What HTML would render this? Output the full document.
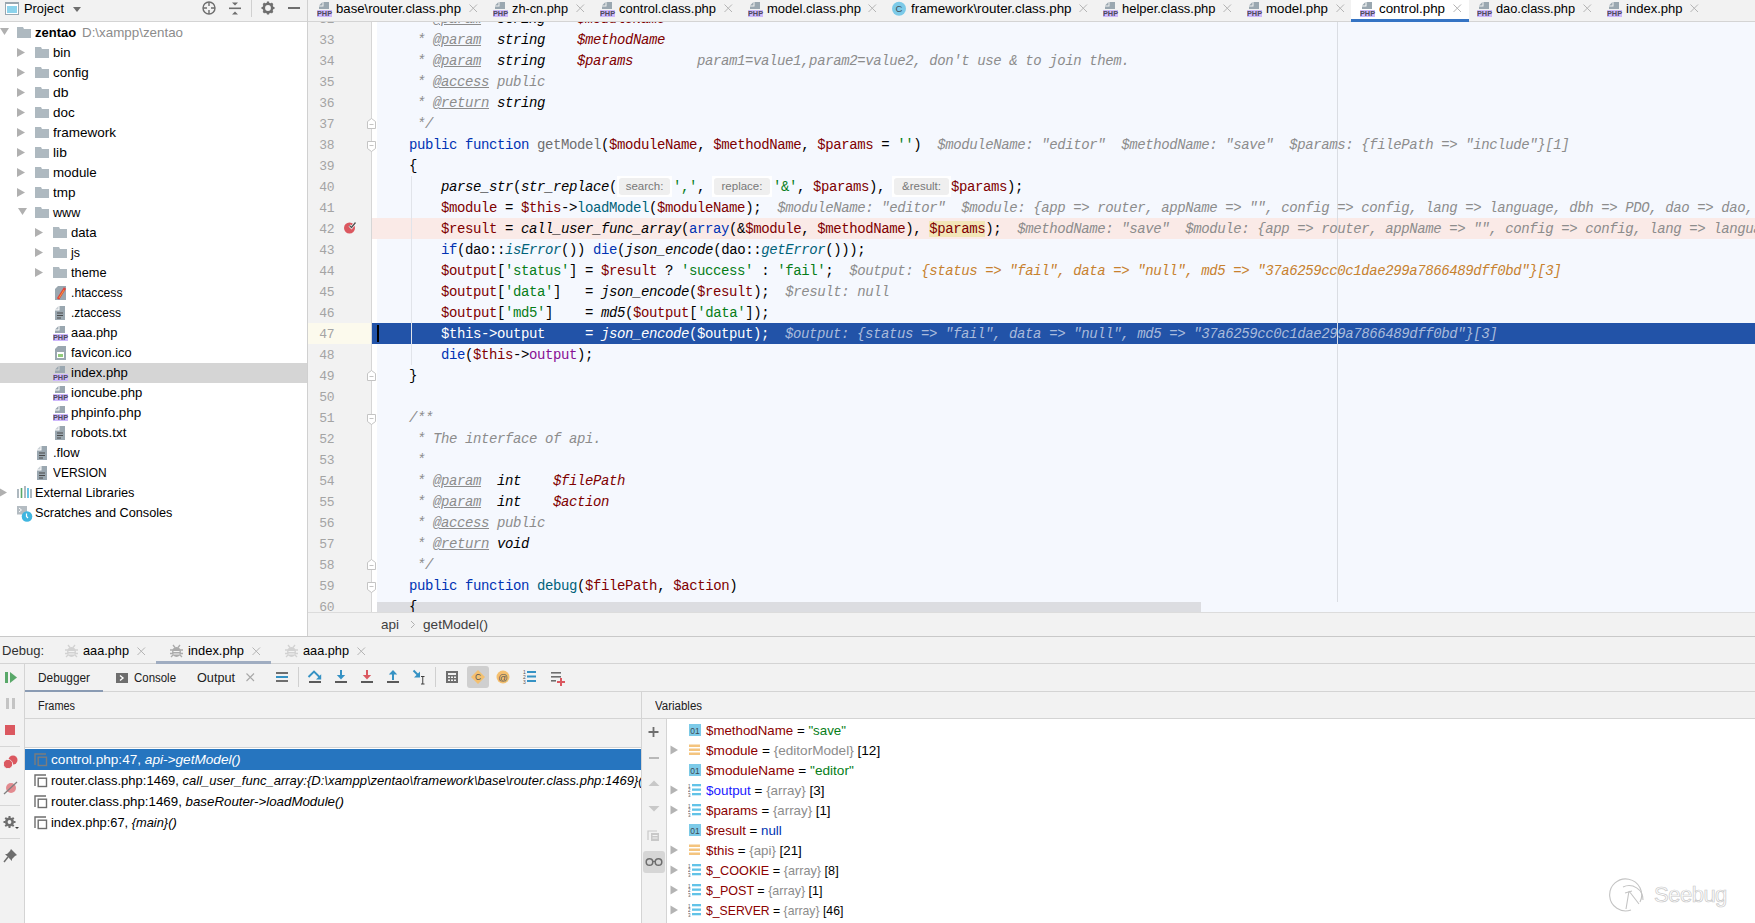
<!DOCTYPE html><html><head><meta charset="utf-8"><style>
*{margin:0;padding:0;box-sizing:border-box}
html,body{width:1755px;height:923px;overflow:hidden;background:#f2f2f2;font-family:"Liberation Sans", sans-serif;}
.a{position:absolute}
.t{position:absolute;white-space:pre;font-family:"Liberation Sans", sans-serif;font-size:13px;color:#000;line-height:20px}
.cl{position:absolute;left:377px;height:21px;white-space:pre;font-family:"Liberation Mono", monospace;font-size:14px;letter-spacing:-0.4px;line-height:21px;color:#000;padding-top:1px}
.k{color:#0033b3}
.s{color:#067d17}
.v{color:#7f0000}
.vi{color:#7f0000;font-style:italic}
.fn{color:#00627a}
.fi{color:#00627a;font-style:italic}
.it{font-style:italic}
.cm{color:#8c8c8c;font-style:italic}
.tag{color:#8c8c8c;font-style:italic;text-decoration:underline}
.bi{font-style:italic;color:#000}
.gm{color:#6e6e6e}
.fld{color:#871094}
.hv{color:#8c8c8c;font-style:italic}
.ho{color:#c7812e;font-style:italic}
.ln{position:absolute;left:308px;width:26px;text-align:right;height:21px;font-family:"Liberation Mono", monospace;font-size:13px;letter-spacing:-0.45px;line-height:21px;color:#a4a4a4;padding-top:1px}
.hint{position:absolute;height:17px;background:#efefef;border-radius:3px;font-family:"Liberation Sans", sans-serif;font-size:11.5px;color:#787878;line-height:17px;text-align:center}
</style></head><body>
<div class="a" style="left:0px;top:0px;width:307px;height:21px;background:#f2f2f2;"></div>
<div class="a" style="left:0px;top:21px;width:307px;height:1px;background:#d4d4d4;"></div>
<div class="a" style="left:0px;top:22px;width:307px;height:614px;background:#ffffff;"></div>
<div class="a" style="left:307px;top:0px;width:1px;height:636px;background:#d0d0d0;"></div>
<svg class="a" style="left:5px;top:2px" width="15" height="14"><rect x="0.5" y="0.5" width="13" height="12" fill="#fff" stroke="#9aa7b0"/><rect x="0" y="0" width="14" height="2" fill="#9aa7b0"/><rect x="2" y="4" width="10" height="7" fill="#40b6e0" opacity="0.6"/></svg>
<div class="t" style="left:24px;top:-1px;font-size:13px;transform:scaleX(0.9886);transform-origin:0 0;">Project</div>
<svg class="a" style="left:73px;top:7px" width="9" height="6"><path d="M0 0H8L4 5Z" fill="#6e6e6e"/></svg>
<svg class="a" style="left:202px;top:1px" width="15" height="15"><circle cx="7" cy="7" r="6" fill="none" stroke="#6e6e6e" stroke-width="1.4"/><path d="M7 1V5M7 9V13M1 7H5M9 7H13" stroke="#6e6e6e" stroke-width="1.4"/></svg>
<svg class="a" style="left:229px;top:2px" width="13" height="13"><path d="M3 0.5H9L6 3.5Z M3 12.5H9L6 9.5Z" fill="#6e6e6e"/><rect x="0" y="5.5" width="12" height="1.6" fill="#6e6e6e"/></svg>
<div class="a" style="left:251px;top:0px;width:1px;height:17px;background:#d0d0d0;"></div>
<svg class="a" style="left:261px;top:1px" width="14" height="14"><circle cx="7" cy="7" r="4.2" fill="none" stroke="#6e6e6e" stroke-width="2.6"/><path d="M7 0.5V3M7 11V13.5M0.5 7H3M11 7H13.5M2.4 2.4L4 4M10 10L11.6 11.6M2.4 11.6L4 10M10 4L11.6 2.4" stroke="#6e6e6e" stroke-width="2.2"/></svg>
<div class="a" style="left:288px;top:7px;width:12px;height:2px;background:#6e6e6e;"></div>
<svg class="a" style="left:0px;top:28px" width="10" height="8"><path d="M0 0H9L4.5 7Z" fill="#b0b0b0"/></svg>
<svg class="a" style="left:17px;top:27px" width="15" height="12"><path d="M0 0H6L7 2H14V11H0Z" fill="#aeb9c0"/></svg>
<div class="t" style="left:35px;top:23px;"><b>zentao</b></div>
<div class="t" style="left:82px;top:23px;font-size:13px;transform:scaleX(1.0277);transform-origin:0 0;color:#8c8c8c;">D:\xampp\zentao</div>
<svg class="a" style="left:17px;top:48px" width="9" height="10"><path d="M0 0L8 4.5L0 9Z" fill="#b0b0b0"/></svg>
<svg class="a" style="left:35px;top:47px" width="15" height="12"><path d="M0 0H6L7 2H14V11H0Z" fill="#aeb9c0"/></svg>
<div class="t" style="left:53px;top:43px;font-size:13px;transform:scaleX(1.0091);transform-origin:0 0;">bin</div>
<svg class="a" style="left:17px;top:68px" width="9" height="10"><path d="M0 0L8 4.5L0 9Z" fill="#b0b0b0"/></svg>
<svg class="a" style="left:35px;top:67px" width="15" height="12"><path d="M0 0H6L7 2H14V11H0Z" fill="#aeb9c0"/></svg>
<div class="t" style="left:53px;top:63px;font-size:13px;transform:scaleX(1.0322);transform-origin:0 0;">config</div>
<svg class="a" style="left:17px;top:88px" width="9" height="10"><path d="M0 0L8 4.5L0 9Z" fill="#b0b0b0"/></svg>
<svg class="a" style="left:35px;top:87px" width="15" height="12"><path d="M0 0H6L7 2H14V11H0Z" fill="#aeb9c0"/></svg>
<div class="t" style="left:53px;top:83px;font-size:13px;transform:scaleX(1.0722);transform-origin:0 0;">db</div>
<svg class="a" style="left:17px;top:108px" width="9" height="10"><path d="M0 0L8 4.5L0 9Z" fill="#b0b0b0"/></svg>
<svg class="a" style="left:35px;top:107px" width="15" height="12"><path d="M0 0H6L7 2H14V11H0Z" fill="#aeb9c0"/></svg>
<div class="t" style="left:53px;top:103px;font-size:13px;transform:scaleX(1.0355);transform-origin:0 0;">doc</div>
<svg class="a" style="left:17px;top:128px" width="9" height="10"><path d="M0 0L8 4.5L0 9Z" fill="#b0b0b0"/></svg>
<svg class="a" style="left:35px;top:127px" width="15" height="12"><path d="M0 0H6L7 2H14V11H0Z" fill="#aeb9c0"/></svg>
<div class="t" style="left:53px;top:123px;font-size:13px;transform:scaleX(1.0377);transform-origin:0 0;">framework</div>
<svg class="a" style="left:17px;top:148px" width="9" height="10"><path d="M0 0L8 4.5L0 9Z" fill="#b0b0b0"/></svg>
<svg class="a" style="left:35px;top:147px" width="15" height="12"><path d="M0 0H6L7 2H14V11H0Z" fill="#aeb9c0"/></svg>
<div class="t" style="left:53px;top:143px;font-size:13px;transform:scaleX(1.0605);transform-origin:0 0;">lib</div>
<svg class="a" style="left:17px;top:168px" width="9" height="10"><path d="M0 0L8 4.5L0 9Z" fill="#b0b0b0"/></svg>
<svg class="a" style="left:35px;top:167px" width="15" height="12"><path d="M0 0H6L7 2H14V11H0Z" fill="#aeb9c0"/></svg>
<div class="t" style="left:53px;top:163px;font-size:13px;transform:scaleX(1.0249);transform-origin:0 0;">module</div>
<svg class="a" style="left:17px;top:188px" width="9" height="10"><path d="M0 0L8 4.5L0 9Z" fill="#b0b0b0"/></svg>
<svg class="a" style="left:35px;top:187px" width="15" height="12"><path d="M0 0H6L7 2H14V11H0Z" fill="#aeb9c0"/></svg>
<div class="t" style="left:53px;top:183px;font-size:13px;transform:scaleX(1.0383);transform-origin:0 0;">tmp</div>
<svg class="a" style="left:18px;top:208px" width="10" height="8"><path d="M0 0H9L4.5 7Z" fill="#b0b0b0"/></svg>
<svg class="a" style="left:35px;top:207px" width="15" height="12"><path d="M0 0H6L7 2H14V11H0Z" fill="#aeb9c0"/></svg>
<div class="t" style="left:53px;top:203px;font-size:13px;transform:scaleX(0.9673);transform-origin:0 0;">www</div>
<svg class="a" style="left:35px;top:228px" width="9" height="10"><path d="M0 0L8 4.5L0 9Z" fill="#b0b0b0"/></svg>
<svg class="a" style="left:53px;top:227px" width="15" height="12"><path d="M0 0H6L7 2H14V11H0Z" fill="#aeb9c0"/></svg>
<div class="t" style="left:71px;top:223px;font-size:13px;transform:scaleX(1.0114);transform-origin:0 0;">data</div>
<svg class="a" style="left:35px;top:248px" width="9" height="10"><path d="M0 0L8 4.5L0 9Z" fill="#b0b0b0"/></svg>
<svg class="a" style="left:53px;top:247px" width="15" height="12"><path d="M0 0H6L7 2H14V11H0Z" fill="#aeb9c0"/></svg>
<div class="t" style="left:71px;top:243px;font-size:13px;transform:scaleX(0.9577);transform-origin:0 0;">js</div>
<svg class="a" style="left:35px;top:268px" width="9" height="10"><path d="M0 0L8 4.5L0 9Z" fill="#b0b0b0"/></svg>
<svg class="a" style="left:53px;top:267px" width="15" height="12"><path d="M0 0H6L7 2H14V11H0Z" fill="#aeb9c0"/></svg>
<div class="t" style="left:71px;top:263px;font-size:13px;transform:scaleX(0.9826);transform-origin:0 0;">theme</div>
<svg class="a" style="left:55px;top:286px" width="12" height="15"><path d="M3 0H11V14H0V3Z" fill="#9aa7b0"/><path d="M3 13L10 2" stroke="#e0443e" stroke-width="2.6"/><path d="M4 12L9 4" stroke="#f4a03a" stroke-width="1"/></svg>
<div class="t" style="left:71px;top:283px;font-size:13px;transform:scaleX(0.9379);transform-origin:0 0;">.htaccess</div>
<svg class="a" style="left:55px;top:306px" width="11" height="15"><path d="M0 3.5L3.5 0V3.5Z" fill="#c9d0d5"/><path d="M4.5 0H10V14H0V4.5H4.5Z" fill="#9aa7b0"/><path d="M2 7H8M2 9.5H8M2 12H6" stroke="#4a4a4a" stroke-width="1"/></svg>
<div class="t" style="left:71px;top:303px;font-size:13px;transform:scaleX(0.9228);transform-origin:0 0;">.ztaccess</div>
<svg class="a" style="left:53px;top:325px" width="16" height="18"><path d="M2 4.5L5.5 1V4.5Z" fill="#9aa7b0"/><path d="M6.5 1H12V8H2V5.5H6.5Z" fill="#9aa7b0"/><rect x="0" y="9" width="15" height="7" fill="#cdb8fb"/><text x="7.5" y="15.4" font-family="Liberation Sans" font-weight="bold" font-size="7.3" text-anchor="middle" fill="#4c4a5c">PHP</text></svg>
<div class="t" style="left:71px;top:323px;font-size:13px;transform:scaleX(0.9873);transform-origin:0 0;">aaa.php</div>
<svg class="a" style="left:55px;top:346px" width="12" height="15"><path d="M3 0H11V14H0V3Z" fill="#9aa7b0"/><rect x="2" y="6" width="7" height="6" fill="#fff"/><rect x="3" y="8" width="5" height="3" fill="#62b543" opacity="0.7"/></svg>
<div class="t" style="left:71px;top:343px;font-size:13px;transform:scaleX(0.9866);transform-origin:0 0;">favicon.ico</div>
<div class="a" style="left:0px;top:363px;width:307px;height:20px;background:#d5d5d5;"></div>
<svg class="a" style="left:53px;top:365px" width="16" height="18"><path d="M2 4.5L5.5 1V4.5Z" fill="#9aa7b0"/><path d="M6.5 1H12V8H2V5.5H6.5Z" fill="#9aa7b0"/><rect x="0" y="9" width="15" height="7" fill="#cdb8fb"/><text x="7.5" y="15.4" font-family="Liberation Sans" font-weight="bold" font-size="7.3" text-anchor="middle" fill="#4c4a5c">PHP</text></svg>
<div class="t" style="left:71px;top:363px;font-size:13px;transform:scaleX(1.0057);transform-origin:0 0;">index.php</div>
<svg class="a" style="left:53px;top:385px" width="16" height="18"><path d="M2 4.5L5.5 1V4.5Z" fill="#9aa7b0"/><path d="M6.5 1H12V8H2V5.5H6.5Z" fill="#9aa7b0"/><rect x="0" y="9" width="15" height="7" fill="#cdb8fb"/><text x="7.5" y="15.4" font-family="Liberation Sans" font-weight="bold" font-size="7.3" text-anchor="middle" fill="#4c4a5c">PHP</text></svg>
<div class="t" style="left:71px;top:383px;font-size:13px;transform:scaleX(1.0065);transform-origin:0 0;">ioncube.php</div>
<svg class="a" style="left:53px;top:405px" width="16" height="18"><path d="M2 4.5L5.5 1V4.5Z" fill="#9aa7b0"/><path d="M6.5 1H12V8H2V5.5H6.5Z" fill="#9aa7b0"/><rect x="0" y="9" width="15" height="7" fill="#cdb8fb"/><text x="7.5" y="15.4" font-family="Liberation Sans" font-weight="bold" font-size="7.3" text-anchor="middle" fill="#4c4a5c">PHP</text></svg>
<div class="t" style="left:71px;top:403px;font-size:13px;transform:scaleX(1.0346);transform-origin:0 0;">phpinfo.php</div>
<svg class="a" style="left:55px;top:426px" width="11" height="15"><path d="M0 3.5L3.5 0V3.5Z" fill="#c9d0d5"/><path d="M4.5 0H10V14H0V4.5H4.5Z" fill="#9aa7b0"/><path d="M2 7H8M2 9.5H8M2 12H6" stroke="#4a4a4a" stroke-width="1"/></svg>
<div class="t" style="left:71px;top:423px;font-size:13px;transform:scaleX(1.0380);transform-origin:0 0;">robots.txt</div>
<svg class="a" style="left:37px;top:446px" width="11" height="15"><path d="M0 3.5L3.5 0V3.5Z" fill="#c9d0d5"/><path d="M4.5 0H10V14H0V4.5H4.5Z" fill="#9aa7b0"/><path d="M2 7H8M2 9.5H8M2 12H6" stroke="#4a4a4a" stroke-width="1"/></svg>
<div class="t" style="left:53px;top:443px;font-size:13px;transform:scaleX(0.9975);transform-origin:0 0;">.flow</div>
<svg class="a" style="left:37px;top:466px" width="11" height="15"><path d="M0 3.5L3.5 0V3.5Z" fill="#c9d0d5"/><path d="M4.5 0H10V14H0V4.5H4.5Z" fill="#9aa7b0"/><path d="M2 7H8M2 9.5H8M2 12H6" stroke="#4a4a4a" stroke-width="1"/></svg>
<div class="t" style="left:53px;top:463px;font-size:13px;transform:scaleX(0.9177);transform-origin:0 0;">VERSION</div>
<svg class="a" style="left:-1px;top:488px" width="9" height="10"><path d="M0 0L8 4.5L0 9Z" fill="#b0b0b0"/></svg>
<svg class="a" style="left:17px;top:486px" width="15" height="13"><path d="M1 3V12M8 0V12M14 3V12" stroke="#9aa7b0" stroke-width="1.6"/><path d="M4.5 2V12" stroke="#59a869" stroke-width="1.6"/><path d="M11 2V12" stroke="#40b6e0" stroke-width="1.6"/></svg>
<div class="t" style="left:35px;top:483px;font-size:13px;transform:scaleX(0.9837);transform-origin:0 0;">External Libraries</div>
<svg class="a" style="left:17px;top:506px" width="17" height="17"><rect x="0" y="0" width="10" height="8.5" fill="#b4bcc2"/><path d="M2 2L4.5 4L2 6" stroke="#fff" stroke-width="1" fill="none"/><circle cx="10" cy="10.5" r="5.3" fill="#40b6e0"/><path d="M9.5 7.5V10.5L11 12" stroke="#fff" stroke-width="1.2" fill="none"/></svg>
<div class="t" style="left:35px;top:503px;font-size:13px;transform:scaleX(0.9751);transform-origin:0 0;">Scratches and Consoles</div>
<div class="a" style="left:308px;top:0px;width:1447px;height:21px;background:#f2f2f2;"></div>
<div class="a" style="left:308px;top:21px;width:1447px;height:1px;background:#d4d4d4;"></div>
<div class="a" style="left:1351px;top:0px;width:118px;height:21px;background:#ffffff;"></div>
<svg class="a" style="left:317px;top:1px" width="16" height="18"><path d="M2 4.5L5.5 1V4.5Z" fill="#9aa7b0"/><path d="M6.5 1H12V8H2V5.5H6.5Z" fill="#9aa7b0"/><rect x="0" y="9" width="15" height="7" fill="#cdb8fb"/><text x="7.5" y="15.4" font-family="Liberation Sans" font-weight="bold" font-size="7.3" text-anchor="middle" fill="#4c4a5c">PHP</text></svg>
<div class="t" style="left:336px;top:-1px;font-size:13px;transform:scaleX(1.0115);transform-origin:0 0;">base\router.class.php</div>
<svg class="a" style="left:469px;top:4px" width="9" height="9"><path d="M0.5 0.5L8 8M8 0.5L0.5 8" stroke="#b4b4b4" stroke-width="1"/></svg>
<svg class="a" style="left:493px;top:1px" width="16" height="18"><path d="M2 4.5L5.5 1V4.5Z" fill="#9aa7b0"/><path d="M6.5 1H12V8H2V5.5H6.5Z" fill="#9aa7b0"/><rect x="0" y="9" width="15" height="7" fill="#cdb8fb"/><text x="7.5" y="15.4" font-family="Liberation Sans" font-weight="bold" font-size="7.3" text-anchor="middle" fill="#4c4a5c">PHP</text></svg>
<div class="t" style="left:512px;top:-1px;font-size:13px;transform:scaleX(0.9809);transform-origin:0 0;">zh-cn.php</div>
<svg class="a" style="left:576px;top:4px" width="9" height="9"><path d="M0.5 0.5L8 8M8 0.5L0.5 8" stroke="#b4b4b4" stroke-width="1"/></svg>
<svg class="a" style="left:600px;top:1px" width="16" height="18"><path d="M2 4.5L5.5 1V4.5Z" fill="#9aa7b0"/><path d="M6.5 1H12V8H2V5.5H6.5Z" fill="#9aa7b0"/><rect x="0" y="9" width="15" height="7" fill="#cdb8fb"/><text x="7.5" y="15.4" font-family="Liberation Sans" font-weight="bold" font-size="7.3" text-anchor="middle" fill="#4c4a5c">PHP</text></svg>
<div class="t" style="left:619px;top:-1px;font-size:13px;transform:scaleX(0.9943);transform-origin:0 0;">control.class.php</div>
<svg class="a" style="left:724px;top:4px" width="9" height="9"><path d="M0.5 0.5L8 8M8 0.5L0.5 8" stroke="#b4b4b4" stroke-width="1"/></svg>
<svg class="a" style="left:748px;top:1px" width="16" height="18"><path d="M2 4.5L5.5 1V4.5Z" fill="#9aa7b0"/><path d="M6.5 1H12V8H2V5.5H6.5Z" fill="#9aa7b0"/><rect x="0" y="9" width="15" height="7" fill="#cdb8fb"/><text x="7.5" y="15.4" font-family="Liberation Sans" font-weight="bold" font-size="7.3" text-anchor="middle" fill="#4c4a5c">PHP</text></svg>
<div class="t" style="left:767px;top:-1px;font-size:13px;transform:scaleX(1.0006);transform-origin:0 0;">model.class.php</div>
<svg class="a" style="left:868px;top:4px" width="9" height="9"><path d="M0.5 0.5L8 8M8 0.5L0.5 8" stroke="#b4b4b4" stroke-width="1"/></svg>
<svg class="a" style="left:892px;top:1px" width="15" height="15"><circle cx="7" cy="7.7" r="7" fill="#7ccae8"/><text x="7" y="11" font-family="Liberation Sans" font-size="9.5" text-anchor="middle" fill="#3c4a55">C</text></svg>
<div class="t" style="left:911px;top:-1px;font-size:13px;transform:scaleX(1.0284);transform-origin:0 0;">framework\router.class.php</div>
<svg class="a" style="left:1079px;top:4px" width="9" height="9"><path d="M0.5 0.5L8 8M8 0.5L0.5 8" stroke="#b4b4b4" stroke-width="1"/></svg>
<svg class="a" style="left:1103px;top:1px" width="16" height="18"><path d="M2 4.5L5.5 1V4.5Z" fill="#9aa7b0"/><path d="M6.5 1H12V8H2V5.5H6.5Z" fill="#9aa7b0"/><rect x="0" y="9" width="15" height="7" fill="#cdb8fb"/><text x="7.5" y="15.4" font-family="Liberation Sans" font-weight="bold" font-size="7.3" text-anchor="middle" fill="#4c4a5c">PHP</text></svg>
<div class="t" style="left:1122px;top:-1px;font-size:13px;transform:scaleX(0.9952);transform-origin:0 0;">helper.class.php</div>
<svg class="a" style="left:1223px;top:4px" width="9" height="9"><path d="M0.5 0.5L8 8M8 0.5L0.5 8" stroke="#b4b4b4" stroke-width="1"/></svg>
<svg class="a" style="left:1247px;top:1px" width="16" height="18"><path d="M2 4.5L5.5 1V4.5Z" fill="#9aa7b0"/><path d="M6.5 1H12V8H2V5.5H6.5Z" fill="#9aa7b0"/><rect x="0" y="9" width="15" height="7" fill="#cdb8fb"/><text x="7.5" y="15.4" font-family="Liberation Sans" font-weight="bold" font-size="7.3" text-anchor="middle" fill="#4c4a5c">PHP</text></svg>
<div class="t" style="left:1266px;top:-1px;font-size:13px;transform:scaleX(1.0213);transform-origin:0 0;">model.php</div>
<svg class="a" style="left:1336px;top:4px" width="9" height="9"><path d="M0.5 0.5L8 8M8 0.5L0.5 8" stroke="#b4b4b4" stroke-width="1"/></svg>
<svg class="a" style="left:1360px;top:1px" width="16" height="18"><path d="M2 4.5L5.5 1V4.5Z" fill="#9aa7b0"/><path d="M6.5 1H12V8H2V5.5H6.5Z" fill="#9aa7b0"/><rect x="0" y="9" width="15" height="7" fill="#cdb8fb"/><text x="7.5" y="15.4" font-family="Liberation Sans" font-weight="bold" font-size="7.3" text-anchor="middle" fill="#4c4a5c">PHP</text></svg>
<div class="t" style="left:1379px;top:-1px;font-size:13px;transform:scaleX(1.0261);transform-origin:0 0;">control.php</div>
<svg class="a" style="left:1453px;top:4px" width="9" height="9"><path d="M0.5 0.5L8 8M8 0.5L0.5 8" stroke="#b4b4b4" stroke-width="1"/></svg>
<svg class="a" style="left:1477px;top:1px" width="16" height="18"><path d="M2 4.5L5.5 1V4.5Z" fill="#9aa7b0"/><path d="M6.5 1H12V8H2V5.5H6.5Z" fill="#9aa7b0"/><rect x="0" y="9" width="15" height="7" fill="#cdb8fb"/><text x="7.5" y="15.4" font-family="Liberation Sans" font-weight="bold" font-size="7.3" text-anchor="middle" fill="#4c4a5c">PHP</text></svg>
<div class="t" style="left:1496px;top:-1px;font-size:13px;transform:scaleX(0.9848);transform-origin:0 0;">dao.class.php</div>
<svg class="a" style="left:1583px;top:4px" width="9" height="9"><path d="M0.5 0.5L8 8M8 0.5L0.5 8" stroke="#b4b4b4" stroke-width="1"/></svg>
<svg class="a" style="left:1607px;top:1px" width="16" height="18"><path d="M2 4.5L5.5 1V4.5Z" fill="#9aa7b0"/><path d="M6.5 1H12V8H2V5.5H6.5Z" fill="#9aa7b0"/><rect x="0" y="9" width="15" height="7" fill="#cdb8fb"/><text x="7.5" y="15.4" font-family="Liberation Sans" font-weight="bold" font-size="7.3" text-anchor="middle" fill="#4c4a5c">PHP</text></svg>
<div class="t" style="left:1626px;top:-1px;font-size:13px;transform:scaleX(1.0021);transform-origin:0 0;">index.php</div>
<svg class="a" style="left:1690px;top:4px" width="9" height="9"><path d="M0.5 0.5L8 8M8 0.5L0.5 8" stroke="#b4b4b4" stroke-width="1"/></svg>
<div class="a" style="left:1351px;top:19px;width:118px;height:3px;background:#3574c4;"></div>
<div class="a" style="left:308px;top:22px;width:64px;height:590px;background:#f2f2f2;"></div>
<div class="a" style="left:371px;top:22px;width:1px;height:590px;background:#d6d6d6;"></div>
<div class="a" style="left:372px;top:22px;width:5px;height:590px;background:#ffffff;"></div>
<div class="a" style="left:377px;top:22px;width:1378px;height:590px;background:#f5f8fe;"></div>
<div class="a" style="left:372px;top:218px;width:1383px;height:21px;background:#faeae7;"></div>
<div class="a" style="left:308px;top:323px;width:63px;height:21px;background:#fcfaed;"></div>
<div class="a" style="left:372px;top:323px;width:1383px;height:21px;background:#2253a8;"></div>
<div class="a" style="left:1337px;top:22px;width:1px;height:580px;background:#dadde3;"></div>
<div class="a" style="left:411px;top:176px;width:1px;height:189px;background:#e1e4ea;"></div>
<div class="a" style="left:308px;top:22px;width:1447px;height:590px;overflow:hidden">
<div class="a" style="left:69px;top:580px;width:824px;height:10px;background:#dcdde1"></div>
<div class="ln" style="left:0px;top:-14px;">32</div>
<div class="cl" style="left:69px;top:-14px;"><span class="cm">     * </span><span class="tag">@param</span>  <span class="bi">string</span>    <span class="vi">$moduleName</span></div>
<div class="ln" style="left:0px;top:7px;">33</div>
<div class="cl" style="left:69px;top:7px;"><span class="cm">     * </span><span class="tag">@param</span>  <span class="bi">string</span>    <span class="vi">$methodName</span></div>
<div class="ln" style="left:0px;top:28px;">34</div>
<div class="cl" style="left:69px;top:28px;"><span class="cm">     * </span><span class="tag">@param</span>  <span class="bi">string</span>    <span class="vi">$params</span><span class="cm">        param1=value1,param2=value2, don&#x27;t use &amp; to join them.</span></div>
<div class="ln" style="left:0px;top:49px;">35</div>
<div class="cl" style="left:69px;top:49px;"><span class="cm">     * </span><span class="tag">@access</span><span class="cm"> public</span></div>
<div class="ln" style="left:0px;top:70px;">36</div>
<div class="cl" style="left:69px;top:70px;"><span class="cm">     * </span><span class="tag">@return</span> <span class="bi">string</span></div>
<div class="ln" style="left:0px;top:91px;">37</div>
<div class="cl" style="left:69px;top:91px;"><span class="cm">     */</span></div>
<div class="ln" style="left:0px;top:112px;">38</div>
<div class="cl" style="left:69px;top:112px;">    <span class="k">public</span> <span class="k">function</span> <span class="gm">getModel</span>(<span class="v">$moduleName</span>, <span class="v">$methodName</span>, <span class="v">$params</span> = <span class="s">&#x27;&#x27;</span>)<span class="hv">  $moduleName: &quot;editor&quot;  $methodName: &quot;save&quot;  $params: {filePath =&gt; &quot;include&quot;}[1]</span></div>
<div class="ln" style="left:0px;top:133px;">39</div>
<div class="cl" style="left:69px;top:133px;">    {</div>
<div class="ln" style="left:0px;top:154px;">40</div>
<div class="ln" style="left:0px;top:175px;">41</div>
<div class="cl" style="left:69px;top:175px;">        <span class="v">$module</span> = <span class="v">$this</span>-&gt;<span class="fn">loadModel</span>(<span class="v">$moduleName</span>);<span class="hv">  $moduleName: &quot;editor&quot;  $module: {app =&gt; router, appName =&gt; &quot;&quot;, config =&gt; config, lang =&gt; language, dbh =&gt; PDO, dao =&gt; dao, post =&gt; post</span></div>
<div class="ln" style="left:0px;top:196px;">42</div>
<div class="cl" style="left:69px;top:196px;">        <span class="v">$result</span> = <span class="it">call_user_func_array</span>(<span class="k">array</span>(&amp;<span class="v">$module</span>, <span class="v">$methodName</span>), <span class="v" style="background:#f2e6b8">$params</span>);<span class="hv">  $methodName: &quot;save&quot;  $module: {app =&gt; router, appName =&gt; &quot;&quot;, config =&gt; config, lang =&gt; language</span></div>
<div class="ln" style="left:0px;top:217px;">43</div>
<div class="cl" style="left:69px;top:217px;">        <span class="k">if</span>(dao::<span class="fi">isError</span>()) <span class="k">die</span>(<span class="it">json_encode</span>(dao::<span class="fi">getError</span>()));</div>
<div class="ln" style="left:0px;top:238px;">44</div>
<div class="cl" style="left:69px;top:238px;">        <span class="v">$output</span>[<span class="s">&#x27;status&#x27;</span>] = <span class="v">$result</span> ? <span class="s">&#x27;success&#x27;</span> : <span class="s">&#x27;fail&#x27;</span>;<span class="hv">  $output: </span><span class="ho">{status =&gt; &quot;fail&quot;, data =&gt; &quot;null&quot;, md5 =&gt; &quot;37a6259cc0c1dae299a7866489dff0bd&quot;}[3]</span></div>
<div class="ln" style="left:0px;top:259px;">45</div>
<div class="cl" style="left:69px;top:259px;">        <span class="v">$output</span>[<span class="s">&#x27;data&#x27;</span>]   = <span class="it">json_encode</span>(<span class="v">$result</span>);<span class="hv">  $result: null</span></div>
<div class="ln" style="left:0px;top:280px;">46</div>
<div class="cl" style="left:69px;top:280px;">        <span class="v">$output</span>[<span class="s">&#x27;md5&#x27;</span>]    = <span class="it">md5</span>(<span class="v">$output</span>[<span class="s">&#x27;data&#x27;</span>]);</div>
<div class="ln" style="left:0px;top:301px;">47</div>
<div class="cl" style="left:69px;top:301px;color:#fff;">        $this-&gt;output     = <span class="it">json_encode</span>($output);<span style="color:#a9bbdc;font-style:italic">  $output: {status =&gt; &quot;fail&quot;, data =&gt; &quot;null&quot;, md5 =&gt; &quot;37a6259cc0c1dae299a7866489dff0bd&quot;}[3]</span></div>
<div class="ln" style="left:0px;top:322px;">48</div>
<div class="cl" style="left:69px;top:322px;">        <span class="k">die</span>(<span class="v">$this</span>-&gt;<span class="fld">output</span>);</div>
<div class="ln" style="left:0px;top:343px;">49</div>
<div class="cl" style="left:69px;top:343px;">    }</div>
<div class="ln" style="left:0px;top:364px;">50</div>
<div class="ln" style="left:0px;top:385px;">51</div>
<div class="cl" style="left:69px;top:385px;"><span class="cm">    /**</span></div>
<div class="ln" style="left:0px;top:406px;">52</div>
<div class="cl" style="left:69px;top:406px;"><span class="cm">     * The interface of api.</span></div>
<div class="ln" style="left:0px;top:427px;">53</div>
<div class="cl" style="left:69px;top:427px;"><span class="cm">     *</span></div>
<div class="ln" style="left:0px;top:448px;">54</div>
<div class="cl" style="left:69px;top:448px;"><span class="cm">     * </span><span class="tag">@param</span>  <span class="bi">int</span>    <span class="vi">$filePath</span></div>
<div class="ln" style="left:0px;top:469px;">55</div>
<div class="cl" style="left:69px;top:469px;"><span class="cm">     * </span><span class="tag">@param</span>  <span class="bi">int</span>    <span class="vi">$action</span></div>
<div class="ln" style="left:0px;top:490px;">56</div>
<div class="cl" style="left:69px;top:490px;"><span class="cm">     * </span><span class="tag">@access</span><span class="cm"> public</span></div>
<div class="ln" style="left:0px;top:511px;">57</div>
<div class="cl" style="left:69px;top:511px;"><span class="cm">     * </span><span class="tag">@return</span> <span class="bi">void</span></div>
<div class="ln" style="left:0px;top:532px;">58</div>
<div class="cl" style="left:69px;top:532px;"><span class="cm">     */</span></div>
<div class="ln" style="left:0px;top:553px;">59</div>
<div class="cl" style="left:69px;top:553px;">    <span class="k">public</span> <span class="k">function</span> <span class="fn">debug</span>(<span class="v">$filePath</span>, <span class="v">$action</span>)</div>
<div class="ln" style="left:0px;top:574px;">60</div>
<div class="cl" style="left:69px;top:574px;">    {</div>
<div class="cl" style="left:133px;top:154px;"><span class="it">parse_str</span>(<span class="it">str_replace</span>(</div>
<div class="a" style="left:309px;top:154px;width:55px;height:21px;background:#fff"></div>
<div class="hint" style="left:311px;top:156px;width:51px;">search:</div>
<div class="cl" style="left:365px;top:154px;"><span class="s">','</span>,</div>
<div class="a" style="left:404px;top:154px;width:60px;height:21px;background:#fff"></div>
<div class="hint" style="left:406px;top:156px;width:56px;">replace:</div>
<div class="cl" style="left:465px;top:154px;"><span class="s">'&amp;'</span>, <span class="v">$params</span>),</div>
<div class="a" style="left:584px;top:154px;width:59px;height:21px;background:#fff"></div>
<div class="hint" style="left:586px;top:156px;width:55px;">&amp;result:</div>
<div class="cl" style="left:643px;top:154px;"><span class="v">$params</span>);</div>
<div class="a" style="left:69px;top:303px;width:2px;height:17px;background:#000"></div>
<svg class="a" style="left:35px;top:198px" width="14" height="14"><circle cx="6.5" cy="8" r="5.5" fill="#db5860"/><path d="M6.5 5.5L8.5 7.5L12.5 2.5" stroke="#fff" stroke-width="2.6" fill="none"/><path d="M6.5 5.5L8.5 7.5L12.5 2.5" stroke="#505050" stroke-width="1.3" fill="none"/></svg>
<svg class="a" style="left:59px;top:96px" width="10" height="12"><path d="M0.5 3.5L4.5 0.5L8.5 3.5V10.5H0.5Z" fill="#fff" stroke="#c4c4c4"/><path d="M2.5 6.5H6.5" stroke="#c4c4c4"/></svg>
<svg class="a" style="left:59px;top:119px" width="10" height="12"><path d="M0.5 0.5H8.5V7.5L4.5 10.5L0.5 7.5Z" fill="#fff" stroke="#c4c4c4"/><path d="M2.5 4.5H6.5" stroke="#c4c4c4"/></svg>
<svg class="a" style="left:59px;top:348px" width="10" height="12"><path d="M0.5 3.5L4.5 0.5L8.5 3.5V10.5H0.5Z" fill="#fff" stroke="#c4c4c4"/><path d="M2.5 6.5H6.5" stroke="#c4c4c4"/></svg>
<svg class="a" style="left:59px;top:392px" width="10" height="12"><path d="M0.5 0.5H8.5V7.5L4.5 10.5L0.5 7.5Z" fill="#fff" stroke="#c4c4c4"/><path d="M2.5 4.5H6.5" stroke="#c4c4c4"/></svg>
<svg class="a" style="left:59px;top:537px" width="10" height="12"><path d="M0.5 3.5L4.5 0.5L8.5 3.5V10.5H0.5Z" fill="#fff" stroke="#c4c4c4"/><path d="M2.5 6.5H6.5" stroke="#c4c4c4"/></svg>
<svg class="a" style="left:59px;top:560px" width="10" height="12"><path d="M0.5 0.5H8.5V7.5L4.5 10.5L0.5 7.5Z" fill="#fff" stroke="#c4c4c4"/><path d="M2.5 4.5H6.5" stroke="#c4c4c4"/></svg>
</div>
<div class="a" style="left:308px;top:612px;width:1447px;height:1px;background:#dcdcdc;"></div>
<div class="a" style="left:308px;top:613px;width:1447px;height:23px;background:#f2f2f2;"></div>
<div class="t" style="left:381px;top:615px;font-size:13px;transform:scaleX(1.0376);transform-origin:0 0;color:#404040;">api</div>
<svg class="a" style="left:410px;top:620px" width="6" height="9"><path d="M1 1L4.5 4.5L1 8" stroke="#b0b0b0" fill="none"/></svg>
<div class="t" style="left:423px;top:615px;font-size:13px;transform:scaleX(1.0461);transform-origin:0 0;color:#404040;">getModel()</div>
<div class="a" style="left:0px;top:636px;width:1755px;height:1px;background:#c9c9c9;"></div>
<div class="a" style="left:0px;top:637px;width:1755px;height:26px;background:#f2f2f2;"></div>
<div class="t" style="left:2px;top:641px;font-size:13px;transform:scaleX(1.0019);transform-origin:0 0;color:#303030;">Debug:</div>
<svg class="a" style="left:65px;top:644px" width="13" height="14"><ellipse cx="6.5" cy="8" rx="4.5" ry="5" fill="#d2d2d2"/><path d="M0 6H13M0 9.5H13M1 13L3 11M12 13L10 11M3 1L5 3.5M10 1L8 3.5" stroke="#d2d2d2" stroke-width="1.3"/><path d="M3.5 7.5H9.5M3.5 10H9.5" stroke="#f2f2f2" stroke-width="1"/></svg>
<div class="t" style="left:83px;top:641px;font-size:13px;transform:scaleX(0.9789);transform-origin:0 0;">aaa.php</div>
<svg class="a" style="left:137px;top:647px" width="9" height="9"><path d="M0.5 0.5L8 8M8 0.5L0.5 8" stroke="#b4b4b4" stroke-width="1"/></svg>
<svg class="a" style="left:170px;top:644px" width="13" height="14"><ellipse cx="6.5" cy="8" rx="4.5" ry="5" fill="#ababab"/><path d="M0 6H13M0 9.5H13M1 13L3 11M12 13L10 11M3 1L5 3.5M10 1L8 3.5" stroke="#ababab" stroke-width="1.3"/><path d="M3.5 7.5H9.5M3.5 10H9.5" stroke="#f2f2f2" stroke-width="1"/></svg>
<div class="t" style="left:188px;top:641px;font-size:13px;transform:scaleX(0.9933);transform-origin:0 0;">index.php</div>
<svg class="a" style="left:252px;top:647px" width="9" height="9"><path d="M0.5 0.5L8 8M8 0.5L0.5 8" stroke="#b4b4b4" stroke-width="1"/></svg>
<svg class="a" style="left:285px;top:644px" width="13" height="14"><ellipse cx="6.5" cy="8" rx="4.5" ry="5" fill="#d2d2d2"/><path d="M0 6H13M0 9.5H13M1 13L3 11M12 13L10 11M3 1L5 3.5M10 1L8 3.5" stroke="#d2d2d2" stroke-width="1.3"/><path d="M3.5 7.5H9.5M3.5 10H9.5" stroke="#f2f2f2" stroke-width="1"/></svg>
<div class="t" style="left:303px;top:641px;font-size:13px;transform:scaleX(0.9789);transform-origin:0 0;">aaa.php</div>
<svg class="a" style="left:357px;top:647px" width="9" height="9"><path d="M0.5 0.5L8 8M8 0.5L0.5 8" stroke="#b4b4b4" stroke-width="1"/></svg>
<div class="a" style="left:0px;top:663px;width:1755px;height:1px;background:#d4d4d4;"></div>
<div class="a" style="left:156px;top:661px;width:115px;height:3px;background:#a0adc1;"></div>
<div class="a" style="left:0px;top:664px;width:24px;height:259px;background:#f2f2f2;"></div>
<div class="a" style="left:24px;top:664px;width:1px;height:259px;background:#d4d4d4;"></div>
<div class="a" style="left:25px;top:664px;width:1730px;height:27px;background:#f2f2f2;"></div>
<div class="t" style="left:38px;top:668px;font-size:12.5px;transform:scaleX(0.9471);transform-origin:0 0;color:#202020;">Debugger</div>
<div class="a" style="left:25px;top:691px;width:1730px;height:1px;background:#d4d4d4;"></div>
<div class="a" style="left:25px;top:690px;width:78px;height:2px;background:#8a9bb3;"></div>
<svg class="a" style="left:116px;top:673px" width="12" height="11"><rect width="12" height="10" fill="#6e6e6e"/><path d="M4 2.5L7 5L4 7.5" stroke="#fff" stroke-width="1.4" fill="none"/></svg>
<div class="t" style="left:134px;top:668px;font-size:12.5px;transform:scaleX(0.9158);transform-origin:0 0;color:#202020;">Console</div>
<div class="t" style="left:197px;top:668px;font-size:12.5px;transform:scaleX(1.0127);transform-origin:0 0;color:#202020;">Output</div>
<svg class="a" style="left:246px;top:673px" width="9" height="9"><path d="M0.5 0.5L8 8M8 0.5L0.5 8" stroke="#a8a8a8" stroke-width="1.1"/></svg>
<svg class="a" style="left:276px;top:671px" width="13" height="13"><rect x="0" y="1" width="12" height="2" fill="#6e6e6e"/><rect x="0" y="5" width="12" height="2" fill="#3592c4"/><rect x="0" y="9" width="12" height="2" fill="#6e6e6e"/></svg>
<div class="a" style="left:298px;top:667px;width:1px;height:20px;background:#d0d0d0;"></div>
<svg class="a" style="left:307px;top:669px" width="16" height="16"><path d="M1.5 8L7 2.5L12.5 8" stroke="#3592c4" stroke-width="1.9" fill="none"/><path d="M9 10.5H14.2V5.3Z" fill="#3592c4"/><rect x="2" y="12" width="12" height="2" fill="#5a5a5a"/></svg>
<svg class="a" style="left:335px;top:669px" width="14" height="16"><path d="M6 1V7" stroke="#3592c4" stroke-width="2"/><path d="M1.8 6H10.2L6 10.5Z" fill="#3592c4"/><rect x="0" y="12" width="12" height="2" fill="#5a5a5a"/></svg>
<svg class="a" style="left:361px;top:669px" width="14" height="16"><path d="M6 1V7" stroke="#db5860" stroke-width="2"/><path d="M1.8 6H10.2L6 10.5Z" fill="#db5860"/><rect x="0" y="12" width="12" height="2" fill="#5a5a5a"/></svg>
<svg class="a" style="left:387px;top:669px" width="14" height="16"><path d="M6 5V11" stroke="#3592c4" stroke-width="2"/><path d="M1.8 5.5H10.2L6 1Z" fill="#3592c4"/><rect x="0" y="12" width="12" height="2" fill="#5a5a5a"/></svg>
<svg class="a" style="left:412px;top:669px" width="16" height="17"><path d="M1.5 1.5L6.5 6.5" stroke="#3592c4" stroke-width="2"/><path d="M8 2.5V8.5H2Z" fill="#3592c4"/><path d="M9 7.5H12.5M10.75 7.5V15M9 15H12.5" stroke="#404040" stroke-width="1"/></svg>
<div class="a" style="left:435px;top:667px;width:1px;height:20px;background:#d0d0d0;"></div>
<svg class="a" style="left:446px;top:671px" width="13" height="13"><rect x="0" y="0" width="12" height="12" fill="#6e6e6e"/><rect x="2" y="2" width="8" height="2" fill="#f2f2f2"/><rect x="2" y="5.5" width="2" height="1.5" fill="#f2f2f2"/><rect x="5" y="5.5" width="2" height="1.5" fill="#f2f2f2"/><rect x="8" y="5.5" width="2" height="1.5" fill="#f2f2f2"/><rect x="2" y="8.5" width="2" height="1.5" fill="#f2f2f2"/><rect x="5" y="8.5" width="2" height="1.5" fill="#f2f2f2"/><rect x="8" y="8.5" width="2" height="1.5" fill="#f2f2f2"/></svg>
<div class="a" style="left:467px;top:666px;width:22px;height:22px;background:#cfcfcf;border-radius:3px;"></div>
<svg class="a" style="left:470px;top:669px" width="16" height="16"><path d="M8 1L15 8L8 15L1 8Z" fill="#f4c06f"/><text x="8" y="11.3" font-family="Liberation Sans" font-size="8.5" text-anchor="middle" fill="#555">C</text></svg>
<svg class="a" style="left:496px;top:670px" width="14" height="14"><circle cx="7" cy="7" r="6.5" fill="#f4c06f"/><text x="7" y="10.5" font-family="Liberation Sans" font-size="9.5" text-anchor="middle" fill="#555">@</text></svg>
<svg class="a" style="left:522px;top:669px" width="16" height="15"><text x="1" y="5" font-family="Liberation Sans" font-size="5" fill="#555">1</text><text x="1" y="10" font-family="Liberation Sans" font-size="5" fill="#555">2</text><text x="1" y="15" font-family="Liberation Sans" font-size="5" fill="#555">3</text><rect x="5" y="2" width="9" height="2" fill="#3592c4"/><rect x="5" y="6.5" width="9" height="2" fill="#3592c4"/><rect x="5" y="11" width="9" height="2" fill="#3592c4"/></svg>
<svg class="a" style="left:551px;top:671px" width="15" height="15"><rect x="0" y="1" width="10" height="1.6" fill="#6e6e6e"/><rect x="0" y="5" width="10" height="1.6" fill="#6e6e6e"/><rect x="0" y="9" width="5" height="1.6" fill="#6e6e6e"/><path d="M10 7V15M6 11H14" stroke="#db5860" stroke-width="2"/></svg>
<svg class="a" style="left:5px;top:672px" width="13" height="12"><rect x="0" y="0" width="3" height="11" fill="#59a869"/><path d="M5 0L12 5.5L5 11Z" fill="#59a869"/></svg>
<svg class="a" style="left:6px;top:698px" width="9" height="12"><rect x="0" y="0" width="3" height="11" fill="#c4c4c4"/><rect x="6" y="0" width="3" height="11" fill="#c4c4c4"/></svg>
<div class="a" style="left:5px;top:725px;width:10px;height:10px;background:#db5860;"></div>
<div class="a" style="left:0px;top:746px;width:20px;height:1px;background:#d6d6d6;"></div>
<svg class="a" style="left:3px;top:755px" width="15" height="14"><circle cx="5" cy="9" r="4.5" fill="#db5860"/><circle cx="10" cy="5" r="4.5" fill="#db5860"/><circle cx="5" cy="9" r="4.5" fill="none" stroke="#f2f2f2" stroke-width="1"/><circle cx="5" cy="9" r="4" fill="#db5860"/></svg>
<svg class="a" style="left:3px;top:781px" width="15" height="14"><circle cx="8" cy="7" r="5" fill="#e38b90"/><path d="M1 13L14 1" stroke="#808080" stroke-width="1.3"/></svg>
<div class="a" style="left:0px;top:805px;width:20px;height:1px;background:#d6d6d6;"></div>
<svg class="a" style="left:3px;top:815px" width="16" height="15"><circle cx="6.5" cy="7" r="3.2" fill="none" stroke="#6e6e6e" stroke-width="2.6"/><path d="M6.5 1V3M6.5 11V13M0.5 7H2.5M10.5 7H12.5M2.3 2.8L3.6 4.1M9.4 9.9L10.7 11.2M2.3 11.2L3.6 9.9M9.4 4.1L10.7 2.8" stroke="#6e6e6e" stroke-width="2"/><path d="M12 12H16L14 14Z" fill="#404040"/></svg>
<div class="a" style="left:0px;top:838px;width:20px;height:1px;background:#d6d6d6;"></div>
<svg class="a" style="left:3px;top:848px" width="15" height="15"><path d="M8 1L14 7L12 8L9 11L9 13L2 6L4 6L7 3Z" fill="#6e6e6e"/><path d="M5 9L1 14" stroke="#6e6e6e" stroke-width="1.5"/></svg>
<div class="a" style="left:25px;top:692px;width:616px;height:26px;background:#f2f2f2;"></div>
<div class="t" style="left:38px;top:696px;font-size:12.5px;transform:scaleX(0.8734);transform-origin:0 0;color:#202020;">Frames</div>
<div class="a" style="left:25px;top:718px;width:1730px;height:1px;background:#d4d4d4;"></div>
<div class="a" style="left:25px;top:719px;width:616px;height:27px;background:#f2f2f2;"></div>
<svg class="a" style="left:594px;top:726px" width="12" height="14"><path d="M6 1V13M1.5 5.5L6 1L10.5 5.5" stroke="#b8b8b8" stroke-width="1.5" fill="none"/></svg>
<svg class="a" style="left:620px;top:726px" width="12" height="14"><path d="M6 1V13M1.5 8.5L6 13L10.5 8.5" stroke="#555" stroke-width="1.5" fill="none"/></svg>
<div class="a" style="left:25px;top:719px;width:616px;height:28px;background:#f2f2f2;"></div>
<div class="a" style="left:25px;top:747px;width:616px;height:1px;background:#d4d4d4;"></div>
<div class="a" style="left:25px;top:748px;width:616px;height:175px;background:#ffffff;"></div>
<div class="a" style="left:25px;top:749px;width:616px;height:21px;background:#2675bf;"></div>
<div class="a" style="left:25px;top:747px;width:616px;height:176px;overflow:hidden">
<svg class="a" style="left:9px;top:6px" width="14" height="14"><path d="M1 12V1H12" stroke="#7c7c7c" stroke-width="1.4" fill="none"/><rect x="4.2" y="4.2" width="8.3" height="8.3" stroke="#7c7c7c" stroke-width="1.4" fill="none"/></svg>
<div class="t" style="left:26px;top:2px;color:#fff;line-height:21px;font-size:13.3px;transform:scaleX(1.024);transform-origin:0 0">control.php:47, <i>api-&gt;getModel()</i></div>
<svg class="a" style="left:9px;top:27px" width="14" height="14"><path d="M1 12V1H12" stroke="#6e6e6e" stroke-width="1.4" fill="none"/><rect x="4.2" y="4.2" width="8.3" height="8.3" stroke="#6e6e6e" stroke-width="1.4" fill="none"/></svg>
<div class="t" style="left:26px;top:23px;color:#000;line-height:21px;font-size:13.3px;transform:scaleX(0.978);transform-origin:0 0">router.class.php:1469, <i>call_user_func_array:{D:\xampp\zentao\framework\base\router.class.php:1469}()</i></div>
<svg class="a" style="left:9px;top:48px" width="14" height="14"><path d="M1 12V1H12" stroke="#6e6e6e" stroke-width="1.4" fill="none"/><rect x="4.2" y="4.2" width="8.3" height="8.3" stroke="#6e6e6e" stroke-width="1.4" fill="none"/></svg>
<div class="t" style="left:26px;top:44px;color:#000;line-height:21px;font-size:13.3px;transform:scaleX(1.0);transform-origin:0 0">router.class.php:1469, <i>baseRouter-&gt;loadModule()</i></div>
<svg class="a" style="left:9px;top:69px" width="14" height="14"><path d="M1 12V1H12" stroke="#6e6e6e" stroke-width="1.4" fill="none"/><rect x="4.2" y="4.2" width="8.3" height="8.3" stroke="#6e6e6e" stroke-width="1.4" fill="none"/></svg>
<div class="t" style="left:26px;top:65px;color:#000;line-height:21px;font-size:13.3px;transform:scaleX(0.966);transform-origin:0 0">index.php:67, <i>{main}()</i></div>
</div>
<div class="a" style="left:641px;top:692px;width:1px;height:231px;background:#d4d4d4;"></div>
<div class="a" style="left:642px;top:692px;width:1113px;height:26px;background:#f2f2f2;"></div>
<div class="t" style="left:655px;top:696px;font-size:12.5px;transform:scaleX(0.9182);transform-origin:0 0;color:#202020;">Variables</div>
<div class="a" style="left:642px;top:719px;width:24px;height:204px;background:#f2f2f2;"></div>
<div class="a" style="left:666px;top:719px;width:1px;height:204px;background:#d4d4d4;"></div>
<div class="a" style="left:667px;top:719px;width:1088px;height:204px;background:#ffffff;"></div>
<svg class="a" style="left:648px;top:726px" width="12" height="12"><path d="M5.5 1V11M0.5 6H10.5" stroke="#6e6e6e" stroke-width="1.8"/></svg>
<div class="a" style="left:649px;top:757px;width:10px;height:2px;background:#b8b8b8;"></div>
<svg class="a" style="left:648px;top:779px" width="12" height="8"><path d="M0.5 7L6 1.5L11.5 7Z" fill="#c8c8c8"/></svg>
<svg class="a" style="left:648px;top:805px" width="12" height="8"><path d="M0.5 1L6 6.5L11.5 1Z" fill="#c8c8c8"/></svg>
<svg class="a" style="left:647px;top:828px" width="14" height="14"><path d="M1 12V3H10" stroke="#c8c8c8" stroke-width="1.2" fill="none"/><rect x="4" y="5" width="8" height="8" fill="#c8c8c8"/><path d="M5.5 7.5H10.5M5.5 10H10.5" stroke="#f2f2f2"/></svg>
<div class="a" style="left:643px;top:851px;width:22px;height:22px;background:#d6d6d6;border-radius:3px;"></div>
<svg class="a" style="left:645px;top:857px" width="18" height="10"><circle cx="4.5" cy="5" r="3.3" fill="none" stroke="#6e6e6e" stroke-width="1.5"/><circle cx="13.5" cy="5" r="3.3" fill="none" stroke="#6e6e6e" stroke-width="1.5"/><path d="M7.5 4.5H10.5" stroke="#6e6e6e" stroke-width="1.2"/></svg>
<svg class="a" style="left:689px;top:724px" width="13" height="13"><rect width="12" height="12" fill="#7ccae8"/><text x="6" y="9.6" font-family="Liberation Sans" font-size="8.5" text-anchor="middle" fill="#3c4a55">01</text></svg>
<div class="t" style="left:706px;top:721px;font-size:13.3px;color:#000;transform:scaleX(1);transform-origin:0 0"><span style="color:#8b0000">$methodName</span> = <span style="color:#067d17">"save"</span></div>
<svg class="a" style="left:670px;top:745px" width="9" height="10"><path d="M0.5 0.5L8 5L0.5 9.5Z" fill="#b4b4b4"/></svg>
<svg class="a" style="left:689px;top:744px" width="12" height="12"><rect x="0" y="0.5" width="11" height="2.5" fill="#f4c47e"/><rect x="0" y="4.5" width="11" height="2.5" fill="#f4c47e"/><rect x="0" y="8.5" width="11" height="2.5" fill="#f4c47e"/></svg>
<div class="t" style="left:706px;top:741px;font-size:13.3px;color:#000;transform:scaleX(1.022);transform-origin:0 0"><span style="color:#8b0000">$module</span> = <span style="color:#8c8c8c">{editorModel}</span> [12]</div>
<svg class="a" style="left:689px;top:764px" width="13" height="13"><rect width="12" height="12" fill="#7ccae8"/><text x="6" y="9.6" font-family="Liberation Sans" font-size="8.5" text-anchor="middle" fill="#3c4a55">01</text></svg>
<div class="t" style="left:706px;top:761px;font-size:13.3px;color:#000;transform:scaleX(1.024);transform-origin:0 0"><span style="color:#8b0000">$moduleName</span> = <span style="color:#067d17">"editor"</span></div>
<svg class="a" style="left:670px;top:785px" width="9" height="10"><path d="M0.5 0.5L8 5L0.5 9.5Z" fill="#b4b4b4"/></svg>
<svg class="a" style="left:688px;top:783px" width="14" height="14"><text x="0" y="4.5" font-family="Liberation Sans" font-size="4.5" fill="#555">1</text><text x="0" y="9" font-family="Liberation Sans" font-size="4.5" fill="#555">2</text><text x="0" y="13.5" font-family="Liberation Sans" font-size="4.5" fill="#555">3</text><rect x="4" y="1" width="9" height="2.3" fill="#62c3e8"/><rect x="4" y="5.5" width="9" height="2.3" fill="#62c3e8"/><rect x="4" y="10" width="9" height="2.3" fill="#62c3e8"/></svg>
<div class="t" style="left:706px;top:781px;font-size:13.3px;color:#000;transform:scaleX(1.01);transform-origin:0 0"><span style="color:#1a1aff">$output</span> = <span style="color:#8c8c8c">{array}</span> [3]</div>
<svg class="a" style="left:670px;top:805px" width="9" height="10"><path d="M0.5 0.5L8 5L0.5 9.5Z" fill="#b4b4b4"/></svg>
<svg class="a" style="left:688px;top:803px" width="14" height="14"><text x="0" y="4.5" font-family="Liberation Sans" font-size="4.5" fill="#555">1</text><text x="0" y="9" font-family="Liberation Sans" font-size="4.5" fill="#555">2</text><text x="0" y="13.5" font-family="Liberation Sans" font-size="4.5" fill="#555">3</text><rect x="4" y="1" width="9" height="2.3" fill="#62c3e8"/><rect x="4" y="5.5" width="9" height="2.3" fill="#62c3e8"/><rect x="4" y="10" width="9" height="2.3" fill="#62c3e8"/></svg>
<div class="t" style="left:706px;top:801px;font-size:13.3px;color:#000;transform:scaleX(1);transform-origin:0 0"><span style="color:#8b0000">$params</span> = <span style="color:#8c8c8c">{array}</span> [1]</div>
<svg class="a" style="left:689px;top:824px" width="13" height="13"><rect width="12" height="12" fill="#7ccae8"/><text x="6" y="9.6" font-family="Liberation Sans" font-size="8.5" text-anchor="middle" fill="#3c4a55">01</text></svg>
<div class="t" style="left:706px;top:821px;font-size:13.3px;color:#000;transform:scaleX(1);transform-origin:0 0"><span style="color:#8b0000">$result</span> = <span style="color:#0033b3">null</span></div>
<svg class="a" style="left:670px;top:845px" width="9" height="10"><path d="M0.5 0.5L8 5L0.5 9.5Z" fill="#b4b4b4"/></svg>
<svg class="a" style="left:689px;top:844px" width="12" height="12"><rect x="0" y="0.5" width="11" height="2.5" fill="#f4c47e"/><rect x="0" y="4.5" width="11" height="2.5" fill="#f4c47e"/><rect x="0" y="8.5" width="11" height="2.5" fill="#f4c47e"/></svg>
<div class="t" style="left:706px;top:841px;font-size:13.3px;color:#000;transform:scaleX(1);transform-origin:0 0"><span style="color:#8b0000">$this</span> = <span style="color:#8c8c8c">{api}</span> [21]</div>
<svg class="a" style="left:670px;top:865px" width="9" height="10"><path d="M0.5 0.5L8 5L0.5 9.5Z" fill="#b4b4b4"/></svg>
<svg class="a" style="left:688px;top:863px" width="14" height="14"><text x="0" y="4.5" font-family="Liberation Sans" font-size="4.5" fill="#555">1</text><text x="0" y="9" font-family="Liberation Sans" font-size="4.5" fill="#555">2</text><text x="0" y="13.5" font-family="Liberation Sans" font-size="4.5" fill="#555">3</text><rect x="4" y="1" width="9" height="2.3" fill="#62c3e8"/><rect x="4" y="5.5" width="9" height="2.3" fill="#62c3e8"/><rect x="4" y="10" width="9" height="2.3" fill="#62c3e8"/></svg>
<div class="t" style="left:706px;top:861px;font-size:13.3px;color:#000;transform:scaleX(0.952);transform-origin:0 0"><span style="color:#8b0000">$_COOKIE</span> = <span style="color:#8c8c8c">{array}</span> [8]</div>
<svg class="a" style="left:670px;top:885px" width="9" height="10"><path d="M0.5 0.5L8 5L0.5 9.5Z" fill="#b4b4b4"/></svg>
<svg class="a" style="left:688px;top:883px" width="14" height="14"><text x="0" y="4.5" font-family="Liberation Sans" font-size="4.5" fill="#555">1</text><text x="0" y="9" font-family="Liberation Sans" font-size="4.5" fill="#555">2</text><text x="0" y="13.5" font-family="Liberation Sans" font-size="4.5" fill="#555">3</text><rect x="4" y="1" width="9" height="2.3" fill="#62c3e8"/><rect x="4" y="5.5" width="9" height="2.3" fill="#62c3e8"/><rect x="4" y="10" width="9" height="2.3" fill="#62c3e8"/></svg>
<div class="t" style="left:706px;top:881px;font-size:13.3px;color:#000;transform:scaleX(0.943);transform-origin:0 0"><span style="color:#8b0000">$_POST</span> = <span style="color:#8c8c8c">{array}</span> [1]</div>
<svg class="a" style="left:670px;top:905px" width="9" height="10"><path d="M0.5 0.5L8 5L0.5 9.5Z" fill="#b4b4b4"/></svg>
<svg class="a" style="left:688px;top:903px" width="14" height="14"><text x="0" y="4.5" font-family="Liberation Sans" font-size="4.5" fill="#555">1</text><text x="0" y="9" font-family="Liberation Sans" font-size="4.5" fill="#555">2</text><text x="0" y="13.5" font-family="Liberation Sans" font-size="4.5" fill="#555">3</text><rect x="4" y="1" width="9" height="2.3" fill="#62c3e8"/><rect x="4" y="5.5" width="9" height="2.3" fill="#62c3e8"/><rect x="4" y="10" width="9" height="2.3" fill="#62c3e8"/></svg>
<div class="t" style="left:706px;top:901px;font-size:13.3px;color:#000;transform:scaleX(0.919);transform-origin:0 0"><span style="color:#8b0000">$_SERVER</span> = <span style="color:#8c8c8c">{array}</span> [46]</div>
<svg class="a" style="left:1609px;top:872px" width="135" height="48"><g fill="none" stroke="#c4c4c4" stroke-width="1.1"><path d="M31 30A16 16 0 1 0 22 38"/><path d="M14 15A14 14 0 0 1 34 28"/><path d="M20 19L17 37M20 19L30 32M16 21L23 19"/></g><text x="45" y="30" font-family="Liberation Sans" font-size="22" fill="#ffffff" stroke="#c9c9c9" stroke-width="0.7" letter-spacing="-0.5">Seebug</text></svg>
</body></html>
